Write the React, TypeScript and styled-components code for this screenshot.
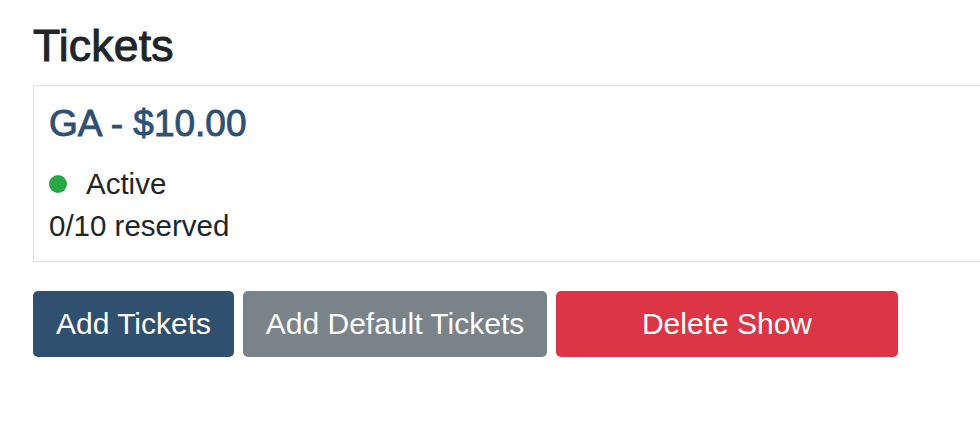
import React from "react";
import styled, { createGlobalStyle } from "styled-components";

const Global = createGlobalStyle`
  html, body {
    margin: 0;
    padding: 0;
    background: #ffffff;
    overflow: hidden;
  }
  body {
    font-family: "Liberation Sans", Arial, Helvetica, sans-serif;
    color: #212529;
  }
`;

const Page = styled.div`
  padding: 20px 0 0 33px;
  overflow: hidden;
`;

const Heading = styled.h3`
  margin: 0 0 13px;
  font-size: 44.5px;
  line-height: 52px;
  font-weight: 400;
  letter-spacing: 0.2px;
  -webkit-text-stroke: 1px #212529;
  color: #212529;
`;

const Card = styled.div`
  width: calc(100% + 40px);
  box-sizing: border-box;
  border: 1px solid #dfdfdf;
  padding: 16px 15px 14px;
  display: flex;
  flex-direction: column;
`;

const CardTitle = styled.h5`
  margin: 0 0 17px;
  font-size: 37px;
  line-height: 1.2;
  font-weight: 400;
  color: #2f5073;
  -webkit-text-stroke: 0.9px #2f5073;
`;

const StatusRow = styled.div`
  display: flex;
  align-items: center;
  gap: 19px;
  font-size: 29.5px;
  line-height: 42px;
`;

const Dot = styled.span<{ $color: string }>`
  width: 18px;
  height: 18px;
  border-radius: 50%;
  background: ${(p) => p.$color};
  flex: none;
`;

const Line = styled.div`
  font-size: 29.5px;
  line-height: 42px;
`;

const Actions = styled.div`
  display: flex;
  gap: 9px;
  margin-top: 29px;
`;

const Button = styled.button<{ $bg: string; $width?: number }>`
  height: 66px;
  padding: 0 22px;
  min-width: ${(p) => (p.$width ? `${p.$width}px` : "auto")};
  border: none;
  border-radius: 5px;
  background: ${(p) => p.$bg};
  color: #ffffff;
  font-family: "Liberation Sans", Arial, Helvetica, sans-serif;
  font-size: 30px;
  line-height: 1;
  cursor: pointer;
`;

export default function App() {
  return (
    <>
      <Global />
      <Page>
        <Heading>Tickets</Heading>
        <Card>
          <CardTitle>GA - $10.00</CardTitle>
          <StatusRow>
            <Dot $color="#28a745" />
            <span>Active</span>
          </StatusRow>
          <Line>0/10 reserved</Line>
        </Card>
        <Actions>
          <Button $bg="#30506f" $width={201}>Add Tickets</Button>
          <Button $bg="#7a828a" $width={304}>Add Default Tickets</Button>
          <Button $bg="#dc3545" $width={342}>Delete Show</Button>
        </Actions>
      </Page>
    </>
  );
}
